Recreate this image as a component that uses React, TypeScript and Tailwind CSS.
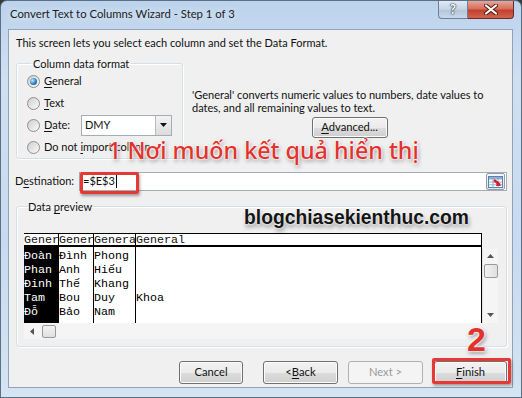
import React from "react";

const ui: React.CSSProperties = { fontFamily: 'Lato, "Noto Sans", sans-serif' };
const mono: React.CSSProperties = { fontFamily: '"Liberation Mono", "DejaVu Sans Mono", monospace' };

function Radio({ checked }: { checked?: boolean }) {
  return (
    <span className="w-[13px] h-[13px] rounded-full border border-[#8f8f8f] bg-[linear-gradient(135deg,#cfcfcf,#fafafa)] flex items-center justify-center shrink-0">
      {checked && (
        <span className="w-[7px] h-[7px] rounded-full bg-[radial-gradient(circle_at_35%_35%,#c0e8ff,#2d80c6_55%,#0f3f70)]" />
      )}
    </span>
  );
}

function Btn({ children, w, disabled }: { children: React.ReactNode; w: string; disabled?: boolean }) {
  return (
    <div
      className={
        "h-[23px] rounded-[3px] border flex items-center justify-center text-[11.2px] " +
        w +
        (disabled
          ? " border-[#adb2b5] bg-[#f4f4f4] text-[#9a9a9a]"
          : " border-[#707070] bg-[linear-gradient(#f2f2f2_0%,#ebebeb_50%,#dddddd_51%,#cfcfcf_100%)] text-[#111] shadow-[inset_0_0_0_1px_#fbfbfb]")
      }
    >
      {children}
    </div>
  );
}

const U = ({ c }: { c: string }) => <span className="underline underline-offset-2">{c}</span>;

const rows = [
  ["Đoàn", "Đình", "Phong", ""],
  ["Phan", "Anh", "Hiếu", ""],
  ["Đinh", "Thế", "Khang", ""],
  ["Tam", "Bou", "Duy", "Khoa"],
  ["Đỗ", "Bảo", "Nam", ""],
];
const heads = ["General", "General", "General", "General"];
const widths = ["w-[35px]", "w-[35px]", "w-[42px]", "flex-1"];

export default function App() {
  return (
    <div className="w-[522px] h-[398px] bg-[#3a3a3a]" style={ui}>
      <div className="relative w-[522px] h-[398px] flex flex-col rounded-t-[7px] border border-[#5b6f87] bg-[linear-gradient(#bcd3ec,#cfe0f2_20%,#c7daef_60%,#d5e4f3)]">
        {/* Title bar */}
        <div className="h-[28px] flex items-start pr-[7px]">
          <div className="self-center pl-[9px] pb-[1px] text-[11.3px] text-[#1b1b1b] [text-shadow:0_0_6px_#eef5fc]">
            Convert Text to Columns Wizard - Step 1 of 3
          </div>
          <div className="ml-auto flex">
            <div className="w-[30px] h-[18px] rounded-bl-[4px] border border-t-0 border-[#6d8099] bg-[linear-gradient(#e2ebf5,#c4d3e4_50%,#b3c5da_51%,#cad8e8)] flex items-center justify-center">
              <span className="text-[13px] font-bold leading-none text-white [text-shadow:0_0_1px_#2d3a4b,0_0_1px_#2d3a4b,0_0_2px_#2d3a4b]">?</span>
            </div>
            <div className="w-[46px] h-[18px] rounded-br-[4px] border border-l-0 border-t-0 border-[#6b2a25] bg-[linear-gradient(#e9a597,#d5705d_45%,#c2412d_55%,#d2634e)] flex items-center justify-center">
              <svg width="14" height="11" viewBox="0 0 14 11">
                <path d="M2 1.5 L12 9.5 M12 1.5 L2 9.5" stroke="#4a1a14" strokeWidth="4" strokeLinecap="round" />
                <path d="M2 1.5 L12 9.5 M12 1.5 L2 9.5" stroke="#ffffff" strokeWidth="2.2" strokeLinecap="round" />
              </svg>
            </div>
          </div>
        </div>

        {/* Client area */}
        <div className="ml-[7px] w-[505px] h-[359px] bg-[#f0f0f0] border border-[#8fa2ba] flex flex-col pl-[7px] pr-[5px] text-[11px] text-[#111]">
          <div className="mt-[5px] h-[15px] leading-[15px]">
            This screen lets you select each column and set the Data Format.
          </div>

          <div className="flex mt-[7px]">
            <fieldset className="w-[167px] border border-[#d5dfe5] rounded-[3px] pl-[10px] shadow-[inset_1px_1px_0_#fff,1px_1px_0_#fff]">
              <legend className="ml-[4px] px-[2px] leading-[13px]">Column data format</legend>
              <div className="h-[22px] flex items-center">
                <Radio checked />
                <span className="ml-[4px]"><U c="G" />eneral</span>
              </div>
              <div className="h-[22px] flex items-center">
                <Radio />
                <span className="ml-[4px]"><U c="T" />ext</span>
              </div>
              <div className="h-[22px] flex items-center">
                <Radio />
                <span className="ml-[4px] w-[37px]"><U c="D" />ate:</span>
                <div className="w-[91px] h-[21px] border border-[#a5acb5] bg-white flex items-center">
                  <span className="pl-[3px] flex-1">DMY</span>
                  <div className="w-[16px] h-[19px] border-l border-[#b7bcc2] bg-[linear-gradient(#f3f3f3,#dcdcdc)] flex items-center justify-center">
                    <svg width="7" height="4" viewBox="0 0 7 4"><path d="M0 0 H7 L3.5 4 Z" fill="#111" /></svg>
                  </div>
                </div>
              </div>
              <div className="h-[22px] flex items-center">
                <Radio />
                <span className="ml-[4px] whitespace-nowrap">Do not <U c="i" />mport column</span>
              </div>
            </fieldset>

            <div className="flex-1 ml-[9px] flex flex-col items-center">
              <div className="self-start mt-[32px] leading-[12.5px] whitespace-nowrap">
                'General' converts numeric values to numbers, date values to
                <br />
                dates, and all remaining values to text.
              </div>
              <div className="mt-[3px]">
                <Btn w="w-[76px] !h-[21px]"><U c="A" />dvanced...</Btn>
              </div>
            </div>
          </div>

          {/* Destination */}
          <div className="flex items-center mt-[13px]">
            <div className="w-[64px] ml-[-1px]">D<U c="e" />stination:</div>
            <div className="flex-1 h-[19px] border border-[#a6acb4] bg-white flex items-center pl-[3px] pr-[1px]">
              <span>=$E$3</span>
              <span className="w-px h-[13px] bg-black ml-[1px]" />
              <div className="ml-auto w-[19px] h-[17px] rounded-[2px] border border-[#8e9bab] bg-[linear-gradient(#f5f8fb,#dde5ee)] flex items-center justify-center">
                <svg width="15" height="12" viewBox="0 0 15 12">
                  <rect x="0.5" y="0.5" width="14" height="11" fill="#fff" stroke="#5a7fa8" />
                  <rect x="1" y="1" width="13" height="2.5" fill="#8fb0d6" />
                  <path d="M0.5 6 H14.5 M0.5 8.8 H14.5 M5 0.5 V11.5 M10 0.5 V11.5" stroke="#7c9cc4" strokeWidth="0.8" />
                  <path d="M6 4 L12 9" stroke="#d21f1f" strokeWidth="2.4" />
                  <path d="M9.5 5 L13 9.8 L8 10 Z" fill="#d21f1f" />
                </svg>
              </div>
            </div>
          </div>

          {/* Data preview */}
          <fieldset className="mt-[9px] border border-[#d5dfe5] rounded-[3px] pl-[7px] pr-[8px] pb-[7px] shadow-[inset_1px_1px_0_#fff,1px_1px_0_#fff]">
            <legend className="ml-[3px] px-[1px] leading-[13px]">Data <U c="p" />review</legend>
            <div className="mt-[20px] flex flex-col">
              <div className="flex h-[90px]">
                <div className="w-[458px] flex bg-white border-t border-r border-black" style={mono}>
                  {widths.map((w, ci) => (
                    <div key={ci} className={"flex flex-col " + w + (ci < 3 ? " border-r border-black" : "")}>
                      <div className="h-[13px] leading-[13px] text-[11.67px] overflow-hidden whitespace-nowrap border-b-2 border-black">
                        {heads[ci]}
                      </div>
                      <div className={"flex-1 pt-[2px] " + (ci === 0 ? "bg-black text-white" : "text-black")}>
                        {rows.map((r, ri) => (
                          <div key={ri} className="h-[14px] leading-[14px] text-[11.67px] whitespace-nowrap overflow-hidden">
                            {r[ci]}
                          </div>
                        ))}
                      </div>
                    </div>
                  ))}
                </div>
                <div className="w-[16px] flex flex-col">
                  <div className="h-[16px]" />
                  <div className="flex-1 bg-[#f5f5f5] border-l border-[#e3e3e3] flex flex-col items-center">
                    <svg className="mt-[5px]" width="7" height="4" viewBox="0 0 7 4"><path d="M3.5 0 L7 4 H0 Z" fill="#555" /></svg>
                    <div className="mt-[6px] w-[14px] h-[14px] rounded-[2px] border border-[#9a9a9a] bg-[linear-gradient(90deg,#f2f2f2,#e0e0e0)]" />
                    <svg className="mt-auto mb-[6px]" width="7" height="4" viewBox="0 0 7 4"><path d="M0 0 H7 L3.5 4 Z" fill="#555" /></svg>
                  </div>
                </div>
              </div>
              <div className="h-[16px] w-[458px] bg-[#f5f5f5] flex items-center">
                <svg className="ml-[6px]" width="4" height="7" viewBox="0 0 4 7"><path d="M0 3.5 L4 0 V7 Z" fill="#555" /></svg>
                <div className="ml-[8px] w-[14px] h-[13px] rounded-[2px] border border-[#9a9a9a] bg-[linear-gradient(#f2f2f2,#e0e0e0)]" />
              </div>
            </div>
          </fieldset>

          {/* Buttons */}
          <div className="mt-[14px] flex justify-end">
            <Btn w="w-[64px]">Cancel</Btn>
            <div className="ml-[20px]"><Btn w="w-[75px]">&lt; <U c="B" />ack</Btn></div>
            <div className="ml-[10px]"><Btn w="w-[75px]" disabled>Next &gt;</Btn></div>
            <div className="ml-[11px]"><Btn w="w-[73px]"><U c="F" />inish</Btn></div>
          </div>
        </div>

        {/* Annotations */}
        <div className="absolute left-[79px] top-[171px] w-[59px] h-[22px] border-[3px] border-[#e53935] rounded-[2px] shadow-[1px_2px_3px_rgba(0,0,0,0.35)]" />
        <div className="absolute left-[431px] top-[357px] w-[79px] h-[26px] border-[3px] border-[#e53935] rounded-[2px] shadow-[1px_2px_3px_rgba(0,0,0,0.35)]" />
        <div
          className="absolute left-[107px] top-[134px] text-[23.3px] font-medium leading-[30px] text-[#e3312c] whitespace-nowrap [text-shadow:0_0_2px_#fff,0_0_2px_#fff,0_0_3px_#fff,1px_2px_4px_rgba(0,0,0,0.5)]"
          style={{ fontFamily: '"Noto Sans", sans-serif' }}
        >
          1 Nơi muốn kết quả hiển thị
        </div>
        <div
          className="absolute left-[243px] top-[205px] text-[19.3px] font-bold leading-[24px] text-[#151515] whitespace-nowrap [text-shadow:0_0_2px_#fff,0_0_3px_#fff,1px_3px_4px_rgba(0,0,0,0.45)]"
          style={{ fontFamily: '"Liberation Sans", Arial, sans-serif' }}
        >
          blogchiasekienthuc.com
        </div>
        <div
          className="absolute left-[466px] top-[318px] text-[34px] font-bold leading-[40px] text-[#e3312c] [text-shadow:0_0_2px_#fff,0_0_2px_#fff,0_0_3px_#fff,1px_2px_4px_rgba(0,0,0,0.5)]"
          style={{ fontFamily: '"Liberation Sans", Arial, sans-serif' }}
        >
          2
        </div>
      </div>
    </div>
  );
}
